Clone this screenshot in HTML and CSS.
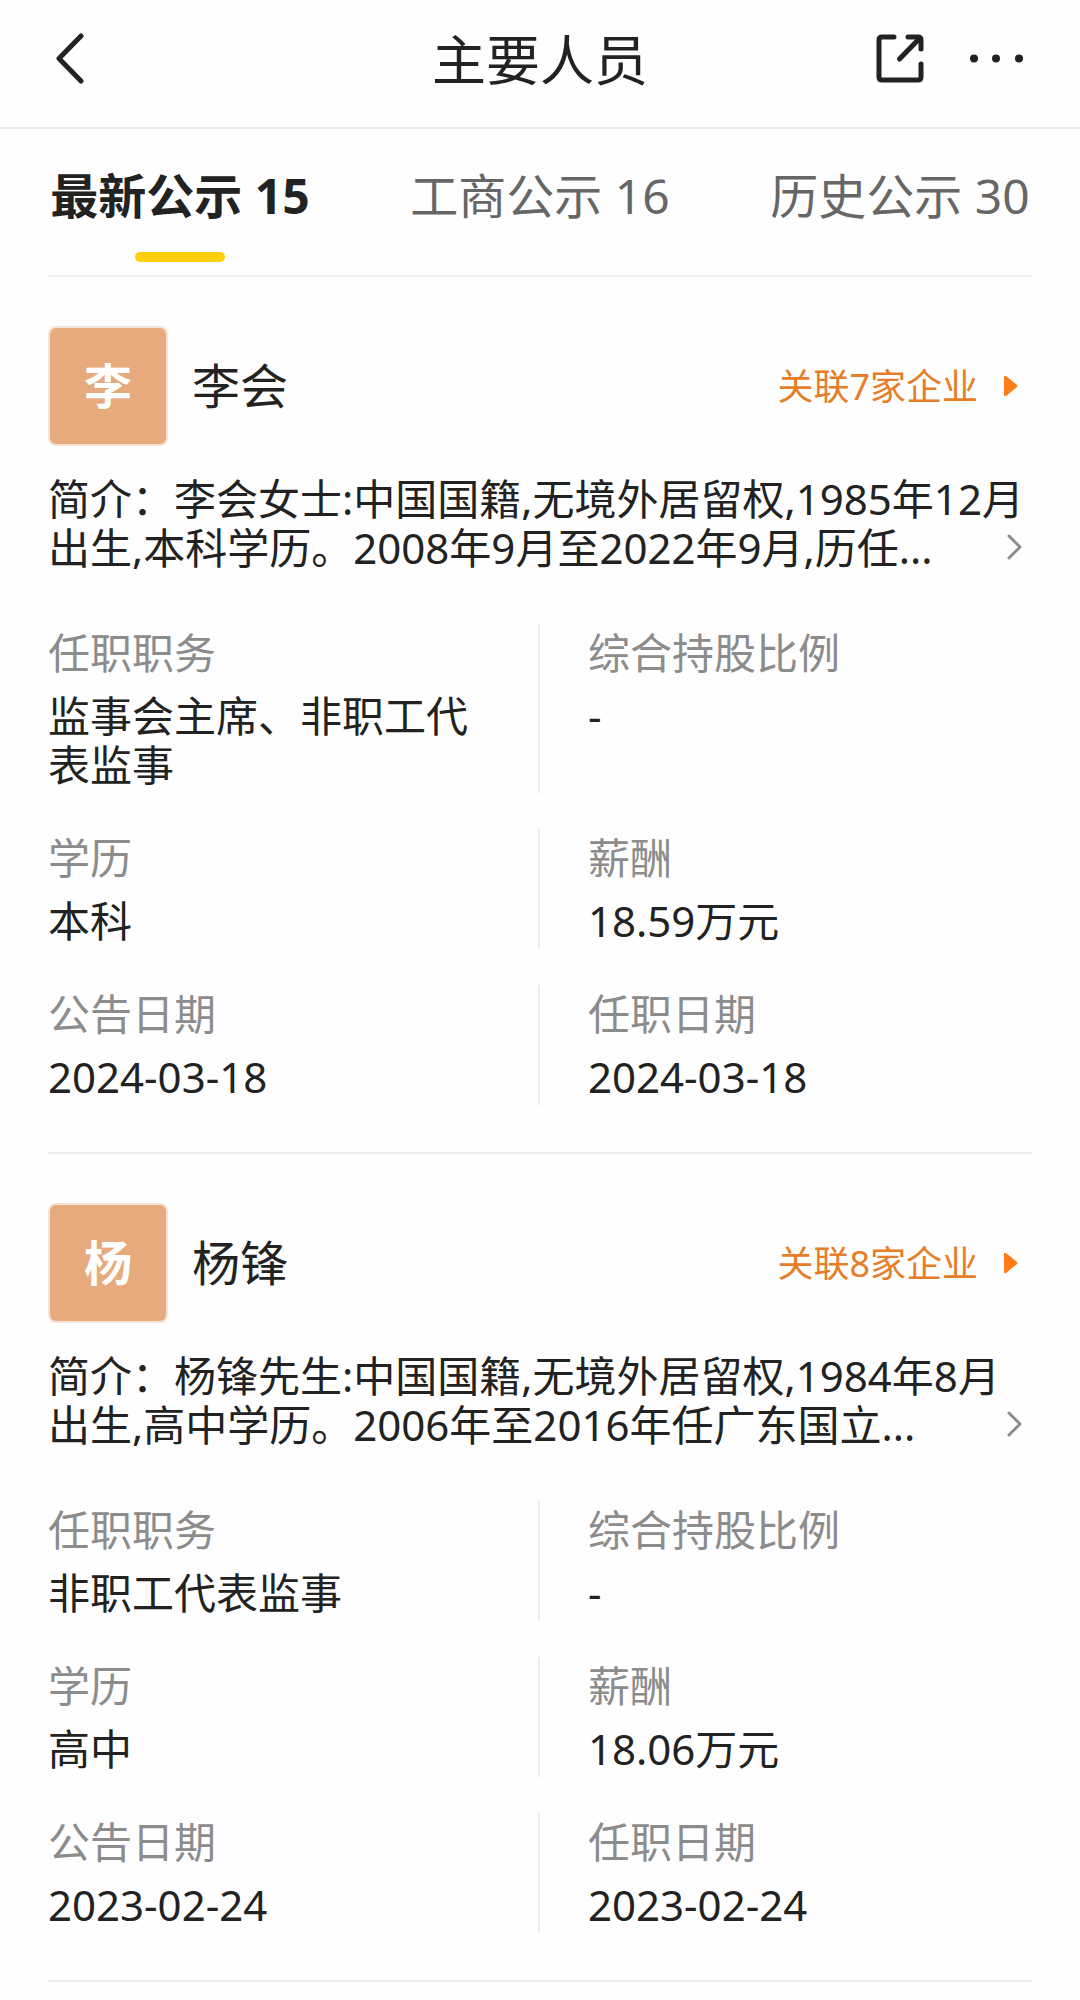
FILE: index.html
```html
<!DOCTYPE html>
<html lang="zh-CN">
<head>
<meta charset="UTF-8">
<meta name="viewport" content="width=device-width, initial-scale=1">
<title>主要人员</title>
<link rel="stylesheet" href="styles.css">
</head>
<body>
<header class="topbar">
  <div class="topbar-side">
    <button class="icon-btn" type="button" aria-label="返回">
      <svg width="32" height="52" viewBox="0 0 32 52" fill="none" stroke="#222" stroke-width="5" stroke-linecap="round" stroke-linejoin="round"><path d="M25 3 3 25.500 25 48"/></svg>
    </button>
  </div>
  <h1 class="topbar-title">主要人员</h1>
  <div class="topbar-side topbar-actions">
    <button class="icon-btn" type="button" aria-label="分享">
      <svg width="48" height="50" viewBox="0 0 48 50" fill="none" stroke="#222" stroke-width="5" stroke-linecap="round" stroke-linejoin="round"><path d="M18 3H6Q3 3 3 6V43Q3 46 6 46H42Q45 46 45 43V30M32 3H42Q45 3 45 6V15"/><path d="M43 5 23.500 25"/></svg>
    </button>
    <button class="icon-btn" type="button" aria-label="更多">
      <svg width="54" height="50" viewBox="0 0 54 50" fill="#222"><circle cx="4" cy="24.500" r="4"/><circle cx="26" cy="24.500" r="4"/><circle cx="49" cy="24.500" r="4"/></svg>
    </button>
  </div>
</header>

<nav class="tabs">
  <a class="tab tab-active" href="#latest" aria-current="page">最新公示 15</a>
  <a class="tab" href="#registered">工商公示 16</a>
  <a class="tab" href="#history">历史公示 30</a>
</nav>

<main class="people">
  <article class="person">
    <div class="person-head">
      <span class="avatar" aria-hidden="true">李</span>
      <h2 class="person-name">李会</h2>
      <a class="related" href="#related-1">关联7家企业
        <svg width="14" height="22" viewBox="0 0 14 22" fill="#ff7d18"><path d="M0 2Q0 0 2 1L13 10Q14 11 13 12L2 21Q0 22 0 20Z"/></svg>
      </a>
    </div>
    <a class="intro" href="#intro-1">简介：李会女士:中国国籍,无境外居留权,1985年12月出生,本科学历。2008年9月至2022年9月,历任...
      <svg class="intro-more" width="16" height="26" viewBox="0 0 16 26" fill="none" stroke="#8c8c8c" stroke-width="3" stroke-linecap="round" stroke-linejoin="round"><path d="M3 2 14 13 3 24"/></svg>
    </a>
    <dl class="facts">
      <div class="fact"><dt>任职职务</dt><dd>监事会主席、非职工代表监事</dd></div>
      <div class="fact"><dt>综合持股比例</dt><dd>-</dd></div>
      <div class="fact"><dt>学历</dt><dd>本科</dd></div>
      <div class="fact"><dt>薪酬</dt><dd>18.59万元</dd></div>
      <div class="fact"><dt>公告日期</dt><dd>2024-03-18</dd></div>
      <div class="fact"><dt>任职日期</dt><dd>2024-03-18</dd></div>
    </dl>
  </article>

  <article class="person">
    <div class="person-head">
      <span class="avatar" aria-hidden="true">杨</span>
      <h2 class="person-name">杨锋</h2>
      <a class="related" href="#related-2">关联8家企业
        <svg width="14" height="22" viewBox="0 0 14 22" fill="#ff7d18"><path d="M0 2Q0 0 2 1L13 10Q14 11 13 12L2 21Q0 22 0 20Z"/></svg>
      </a>
    </div>
    <a class="intro" href="#intro-2">简介：杨锋先生:中国国籍,无境外居留权,1984年8月出生,高中学历。2006年至2016年任广东国立...
      <svg class="intro-more" width="16" height="26" viewBox="0 0 16 26" fill="none" stroke="#8c8c8c" stroke-width="3" stroke-linecap="round" stroke-linejoin="round"><path d="M3 2 14 13 3 24"/></svg>
    </a>
    <dl class="facts">
      <div class="fact"><dt>任职职务</dt><dd>非职工代表监事</dd></div>
      <div class="fact"><dt>综合持股比例</dt><dd>-</dd></div>
      <div class="fact"><dt>学历</dt><dd>高中</dd></div>
      <div class="fact"><dt>薪酬</dt><dd>18.06万元</dd></div>
      <div class="fact"><dt>公告日期</dt><dd>2023-02-24</dd></div>
      <div class="fact"><dt>任职日期</dt><dd>2023-02-24</dd></div>
    </dl>
  </article>
</main>
</body>
</html>
```
FILE: styles.css
```css
* {
  box-sizing: border-box;
}

body {
  margin: 0;
  background: #fefefe;
  color: #222;
  font-family: "Noto Sans", "Noto Sans CJK SC", sans-serif;
  font-size: 42px;
  line-height: 49px;
}

h1,
h2,
dl,
dd {
  margin: 0;
  font-weight: 400;
}

a {
  color: inherit;
  text-decoration: none;
}

svg {
  display: block;
  flex: none;
}

/* Top bar */
.topbar {
  display: flex;
  align-items: center;
  padding: 22px 56px 32px;
  border-bottom: 2px solid #ececec;
}

.topbar-side {
  display: flex;
  flex: 1;
}

.topbar-actions {
  justify-content: flex-end;
  gap: 46px;
}

.topbar-title {
  padding-top: 4px;
  font-size: 54px;
  line-height: 69px;
}

.icon-btn {
  padding: 0;
  border: 0;
  background: none;
}

/* Tabs */
.tabs {
  display: grid;
  grid-template-columns: repeat(3, 1fr);
}

.tab {
  display: flex;
  flex-direction: column;
  align-items: center;
  gap: 24px;
  padding: 35px 0 13px;
  color: #666;
  font-size: 48px;
  line-height: 64px;
  white-space: nowrap;
}

.tab::after {
  content: "";
  width: 90px;
  height: 10px;
  border-radius: 5px;
}

.tab-active {
  color: #222;
  font-weight: 700;
}

.tab-active::after {
  background: #fdd00b;
}

/* People */
.people {
  margin: 0 48px;
  border-top: 2px solid #ececec;
}

.person {
  padding: 49px 0 47px;
  border-bottom: 2px solid #ececec;
}

.person-head {
  display: flex;
  align-items: center;
}

.avatar {
  display: grid;
  place-items: center;
  width: 120px;
  height: 120px;
  border: 2px solid #f5e3d8;
  border-radius: 8px;
  background: #e6aa7c;
  color: #fff;
  font-size: 48px;
  font-weight: 700;
  line-height: 64px;
}

.person-name {
  flex: 1;
  padding-left: 24px;
  font-size: 48px;
  line-height: 64px;
}

.related {
  display: flex;
  align-items: center;
  gap: 26px;
  padding-right: 14px;
  color: #e67d28;
  font-size: 36px;
}

.intro {
  display: block;
  position: relative;
  margin: 28px 0 52px;
}

/* Chevron over the free end of the last line */
.intro-more {
  position: absolute;
  right: 10px;
  bottom: 12px;
}

/* Facts */
.facts {
  display: grid;
  grid-template-columns: 1fr 1fr;
  row-gap: 36px;
}

.fact {
  display: flex;
  flex-direction: column;
  gap: 14px;
  padding: 4px 0 4px 48px;
}

.fact:nth-child(odd) {
  padding: 4px 46px 4px 0;
  border-right: 2px solid #ececec;
}

.fact dt {
  color: #8c8c8c;
}
```
